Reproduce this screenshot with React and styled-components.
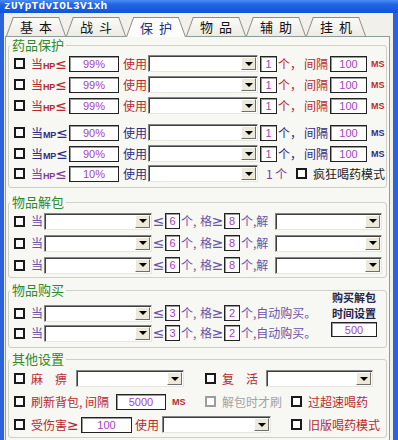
import styled, { createGlobalStyle } from 'styled-components'

const GlobalStyle = createGlobalStyle`
  html, body { margin: 0; padding: 0; }
  body {
    font-family: "Noto Sans CJK SC", "Noto Sans", sans-serif;
    font-size: 12px;
  }
`

const TONES = {
  red: '#b62a2e',
  navy: '#2c2c86',
  violet: '#7b3c9c',
  lilac: '#6a55a8',
  ink: '#1c1c1c',
  muted: '#a3a3a3',
  title: '#24244c',
}

const Window = styled.div`
  width: 398px;
  height: 440px;
  overflow: hidden;
  display: flex;
  flex-direction: column;
  background: #2b63dc;
`

const TitleBar = styled.div`
  height: 13px;
  padding-left: 4px;
  background: linear-gradient(180deg, #4a8cf2 0%, #2264e4 35%, #0f55dc 100%);
  color: #fff;
  font: bold 11px/13px "Liberation Mono", monospace;
  letter-spacing: 0.3px;
`

const Frame = styled.div`
  flex: 1;
  display: flex;
  flex-direction: column;
  border-left: 4px solid #2b63dc;
  border-right: 5px solid #2b63dc;
  background: #f1f0ea;
  padding-top: 4px;
`

const TabStrip = styled.div`
  display: flex;
  height: 19px;
  padding-left: 2px;
`

const Tab = styled.div`
  position: relative;
  width: 60px;
  height: ${(p) => (p.$active ? 20 : 19)}px;
  margin-bottom: ${(p) => (p.$active ? -1 : 0)}px;
  z-index: ${(p) => (p.$active ? 2 : 1)};
  display: flex;
  align-items: center;
  justify-content: center;

  &::before,
  &::after {
    content: '';
    position: absolute;
    top: 0;
    bottom: 0;
    width: 58%;
    border-top: 1px solid #8d8d86;
    background: ${(p) =>
      p.$active
        ? '#fcfcfa'
        : 'linear-gradient(180deg, #fbfbf8 0%, #ecebe4 100%)'};
  }
  &::before {
    left: 0;
    border-left: 1px solid #8d8d86;
    transform: skewX(-20deg);
    transform-origin: bottom left;
  }
  &::after {
    right: 0;
    border-right: 1px solid #8d8d86;
    transform: skewX(20deg);
    transform-origin: bottom right;
  }
`

const TabLabel = styled.span`
  position: relative;
  z-index: 1;
  font-size: 13px;
  letter-spacing: 6px;
  margin-right: -6px;
  color: ${(p) => (p.$active ? '#1d2f7a' : '#111')};
`

const Panel = styled.div`
  flex: 1;
  margin: 0 3px 0 1px;
  border: 1px solid #919b9c;
  border-bottom: none;
  background: #f7f7f3;
  padding: 0 2px;
  display: flex;
  flex-direction: column;
`

const Group = styled.fieldset`
  margin: ${(p) => p.$mt || 0}px 0 0;
  padding: 0 5px ${(p) => p.$pb || 0}px;
  border: 1px solid #cfcfc3;
  border-radius: 3px;
  min-width: 0;
`

const Legend = styled.legend`
  padding: 0 2px;
  margin-left: -4px;
  color: #2c8a2c;
  font-size: 13px;
  line-height: 16px;
`

const Row = styled.div`
  display: flex;
  align-items: center;
  height: ${(p) => p.$h || 21}px;
  margin-top: ${(p) => p.$mt || 0}px;
`

const Check = styled.span`
  flex: none;
  width: 11px;
  height: 11px;
  box-sizing: border-box;
  border: 2px solid ${(p) => (p.$muted ? '#9c9c9c' : '#1a1a1a')};
  background: #fff;
  margin-right: 6px;
`

const Label = styled.span`
  flex: none;
  display: inline-block;
  width: ${(p) => (p.$w ? `${p.$w}px` : 'auto')};
  margin-left: ${(p) => p.$ml || 0}px;
  padding-left: ${(p) => p.$pl || 0}px;
  box-sizing: border-box;
  color: ${(p) => TONES[p.$tone || 'ink']};
  text-align: ${(p) => (p.$center ? 'center' : 'left')};
  white-space: nowrap;
  line-height: 16px;
`

const Unit = styled.span`
  font: bold 9px "Liberation Sans", sans-serif;
  letter-spacing: -0.2px;
`

const Sign = styled.span`
  font-size: 14px;
  font-family: "DejaVu Sans", sans-serif;
`

const Ms = styled.span`
  flex: none;
  margin-left: ${(p) => p.$ml || 4}px;
  color: ${(p) => TONES[p.$tone || 'red']};
  font: bold 9px "Liberation Sans", sans-serif;
`

const NumBox = styled.span`
  flex: none;
  display: inline-flex;
  align-items: center;
  justify-content: center;
  width: ${(p) => p.$w}px;
  height: ${(p) => p.$h || 16}px;
  margin-left: ${(p) => p.$ml || 0}px;
  margin-top: ${(p) => p.$mt || 0}px;
  box-sizing: border-box;
  border: 1px solid #222;
  box-shadow: inset 1px 1px 0 #9a9a9a;
  background: #fff;
  color: #a442c2;
  font: 11px "Liberation Sans", sans-serif;
`

const Select = styled.span`
  flex: none;
  display: inline-flex;
  justify-content: flex-end;
  align-items: center;
  width: ${(p) => p.$w}px;
  height: 17px;
  margin-left: ${(p) => p.$ml || 0}px;
  box-sizing: border-box;
  padding: 1px;
  background: #fff;
  border: 1px solid;
  border-color: #858585 #e6e6de #e6e6de #858585;
  box-shadow: inset 1px 1px 0 #3f3f3f;
`

const DropButton = styled.span`
  width: 15px;
  height: 13px;
  box-sizing: border-box;
  background: #ece9d8;
  border: 1px solid;
  border-color: #fff #6f6f6f #6f6f6f #fff;
  display: flex;
  align-items: center;
  justify-content: center;

  &::after {
    content: '';
    border-left: 4px solid transparent;
    border-right: 4px solid transparent;
    border-top: 4px solid #000;
  }
`

const Dropdown = ({ w, ml }) => (
  <Select $w={w} $ml={ml}>
    <DropButton />
  </Select>
)

const BuyGrid = styled.div`
  display: grid;
  grid-template-columns: 1fr auto;
  padding-top: 5px;
`

const BuyTime = styled.div`
  display: flex;
  flex-direction: column;
  align-items: center;
  margin: -14px 4px 0 0;
`

const BuyTitle = styled.div`
  color: ${TONES.title};
  font-weight: bold;
  font-size: 11px;
  line-height: 16px;
  text-align: center;
`

const OtherGrid = styled.div`
  display: grid;
  grid-template-columns: 191px 86px 1fr;
  grid-auto-rows: 23px;
  align-items: center;
`

const Cell = styled.div`
  display: flex;
  align-items: center;
  grid-column: ${(p) => (p.$span ? `span ${p.$span}` : 'auto')};
`

const tabs = ['基本', '战斗', '保护', '物品', '辅助', '挂机']

const medRows = [
  { unit: 'HP', pct: '99%', tone: 'red' },
  { unit: 'HP', pct: '99%', tone: 'red' },
  { unit: 'HP', pct: '99%', tone: 'red' },
  { unit: 'MP', pct: '90%', tone: 'navy', mt: 6 },
  { unit: 'MP', pct: '90%', tone: 'navy' },
]

const MedRow = ({ unit, pct, tone, mt }) => (
  <Row $mt={mt}>
    <Check />
    <Label $w={38} $tone={tone}>
      当<Unit>{unit}</Unit>
      <Sign>≤</Sign>
    </Label>
    <NumBox $w={50}>{pct}</NumBox>
    <Label $w={29} $pl={4} $tone={tone}>使用</Label>
    <Dropdown w={110} />
    <NumBox $w={17} $ml={2}>1</NumBox>
    <Label $w={27} $pl={1} $tone={tone}>个，</Label>
    <Label $w={26} $tone={tone}>间隔</Label>
    <NumBox $w={37}>100</NumBox>
    <Ms $tone={tone}>MS</Ms>
  </Row>
)

const CountRow = ({ first, second, tail, tone = 'lilac' }) => (
  <Row $h={first === '3' ? 20 : 22}>
    <Check />
    <Label $w={13} $tone={tone}>当</Label>
    <Dropdown w={108} />
    <Label $w={13} $center $tone={tone}><Sign>≤</Sign></Label>
    <NumBox $w={15}>{first}</NumBox>
    <Label $w={20} $pl={1} $tone={tone}>个,</Label>
    <Label $w={11} $tone={tone}>格</Label>
    <Label $w={13} $center $tone={tone}><Sign>≥</Sign></Label>
    <NumBox $w={16}>{second}</NumBox>
    {tail}
  </Row>
)

const App = () => {
  return (
    <Window>
      <GlobalStyle />
      <TitleBar>zUYpTdvIOL3V1xh</TitleBar>
      <Frame>
        <TabStrip>
          {tabs.map((t, i) => (
            <Tab key={t} $active={i === 2}>
              <TabLabel $active={i === 2}>{t}</TabLabel>
            </Tab>
          ))}
        </TabStrip>
        <Panel>
          <Group $pb={4}>
            <Legend>药品保护</Legend>
            {medRows.map((r, i) => (
              <MedRow key={i} {...r} />
            ))}
            <Row $h={19}>
              <Check />
              <Label $w={38} $tone="violet">
                当<Unit>HP</Unit>
                <Sign>≤</Sign>
              </Label>
              <NumBox $w={50}>10%</NumBox>
              <Label $w={29} $pl={4} $tone="navy">使用</Label>
              <Dropdown w={110} />
              <Label $w={30} $ml={8} $tone="violet">1 个</Label>
              <Check />
              <Label $tone="ink">疯狂喝药模式</Label>
            </Row>
          </Group>

          <Group $mt={6} $pb={1}>
            <Legend>物品解包</Legend>
            {[0, 1, 2].map((i) => (
              <CountRow
                key={i}
                first="6"
                second="8"
                tail={
                  <>
                    <Label $w={35} $pl={1} $tone="lilac">个,解</Label>
                    <Dropdown w={107} />
                  </>
                }
              />
            ))}
          </Group>

          <Group $mt={4} $pb={4}>
            <Legend>物品购买</Legend>
            <BuyGrid>
              <div>
                {[0, 1].map((i) => (
                  <CountRow
                    key={i}
                    first="3"
                    second="2"
                    tail={<Label $pl={1} $tone="lilac">个,自动购买。</Label>}
                  />
                ))}
              </div>
              <BuyTime>
                <BuyTitle>
                  购买解包
                  <br />
                  时间设置
                </BuyTitle>
                <NumBox $w={46} $h={15} $mt={1}>
                  500
                </NumBox>
              </BuyTime>
            </BuyGrid>
          </Group>

          <Group $mt={3} $pb={1}>
            <Legend>其他设置</Legend>
            <OtherGrid>
              <Cell>
                <Check />
                <Label $w={45} $tone="red">麻　痹</Label>
                <Dropdown w={108} />
              </Cell>
              <Cell $span={2}>
                <Check />
                <Label $w={44} $tone="red">复　活</Label>
                <Dropdown w={107} />
              </Cell>

              <Cell>
                <Check />
                <Label $w={85} $tone="red">刷新背包, 间隔</Label>
                <NumBox $w={50}>5000</NumBox>
                <Ms $ml={6}>MS</Ms>
              </Cell>
              <Cell>
                <Check $muted />
                <Label $tone="muted">解包时才刷</Label>
              </Cell>
              <Cell>
                <Check />
                <Label $tone="red">过超速喝药</Label>
              </Cell>

              <Cell $span={2}>
                <Check />
                <Label $w={50} $tone="red">
                  受伤害<Sign>≥</Sign>
                </Label>
                <NumBox $w={51}>100</NumBox>
                <Label $w={30} $pl={3} $tone="red">使用</Label>
                <Dropdown w={109} />
              </Cell>
              <Cell>
                <Check />
                <Label $tone="red">旧版喝药模式</Label>
              </Cell>
            </OtherGrid>
          </Group>
        </Panel>
      </Frame>
    </Window>
  )
}

export default App
